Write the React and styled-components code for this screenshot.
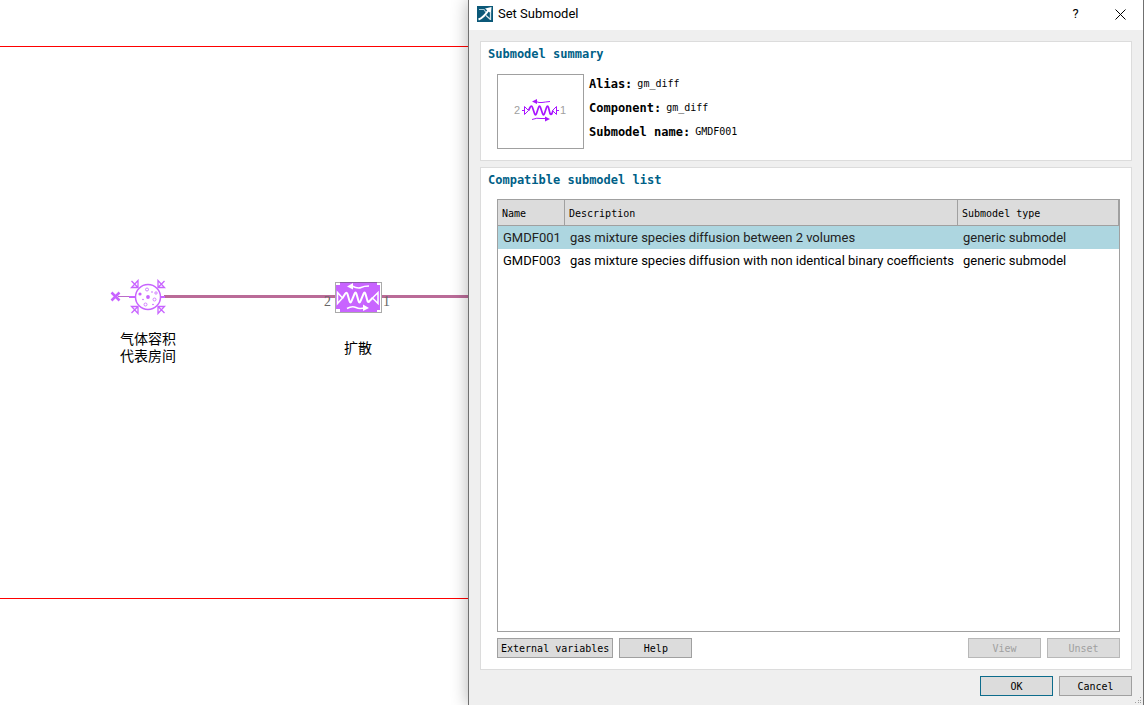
import React from "react";
import styled, { createGlobalStyle, css } from "styled-components";

const mono = '"DejaVu Sans Mono", "Noto Sans CJK SC", monospace';
const sans = 'Roboto, "Noto Sans CJK SC", sans-serif';

const GlobalStyle = createGlobalStyle`
  *, *::before, *::after { box-sizing: border-box; }
  body { margin: 0; background: #fff; color: #000; font: 10px/16px ${mono}; }
  h1, h2, p, dl, dt, dd, figure { margin: 0; }
`;

const Page = styled.div`
  display: grid;
  grid-template-columns: minmax(0, 468fr) minmax(0, 676fr);
  min-height: 100vh;
  overflow: hidden;
`;

const Canvas = styled.main`
  display: flex;
  padding: 46px 0 106px;
  overflow: hidden;
`;

const Sheet = styled.div`
  position: relative;
  flex: 1;
  border: solid #f00;
  border-width: 1px 0;
`;

const Wire = styled.div`
  position: absolute;
  top: 248px;
  left: 164px;
  right: 0;
  height: 3px;
  background: #ba6b98;
`;

const Node = styled.figure`
  position: absolute;
  top: ${(p) => p.$top}px;
  left: ${(p) => p.$left}px;
  width: ${(p) => p.$width}px;
  display: flex;
  flex-direction: column;
  align-items: center;

  svg { display: block; }
`;

const NodeLabel = styled.figcaption`
  margin-top: ${(p) => p.$gap}px;
  font: 14px/17px "Noto Sans CJK SC", sans-serif;
  text-align: center;
  white-space: pre;
`;

const Dialog = styled.section`
  position: relative;
  display: flex;
  flex-direction: column;
  border: solid #707070;
  border-width: 0 1px;
  background: #efefef;
  box-shadow: 0 0 16px rgba(0, 0, 0, 0.3);
`;

const TitleBar = styled.header`
  display: flex;
  align-items: center;
  height: 30px;
  padding: 0 0 2px 8px;
  background: #fff;
`;

const Title = styled.h1`
  flex: 1;
  margin-left: 5px;
  font: 13px/20px ${sans};
`;

const TitleButton = styled.button`
  display: grid;
  place-items: center;
  width: 45px;
  height: 28px;
  padding: 0;
  border: 0;
  background: none;
  font: 13px/20px ${sans};
  color: #000;
`;

const Body = styled.div`
  flex: 1;
  display: flex;
  flex-direction: column;
  gap: 6px;
  padding: 11px 11px 9px;
`;

const Panel = styled.section`
  display: flex;
  flex-direction: column;
  padding: 4px 11px 11px 16px;
  border: 1px solid #dcdcdc;
  background: #fff;
  ${(p) => p.$grow && css`flex: 1;`}
`;

const PanelTitle = styled.h2`
  margin-left: -9px;
  font: bold 12px/16px ${mono};
  color: #005f87;
`;

const Summary = styled.div`
  display: flex;
  gap: 5px;
  margin-top: 12px;
`;

const Thumb = styled.div`
  display: grid;
  place-items: center;
  width: 87px;
  height: 75px;
  border: 1px solid #a0a0a0;
`;

const Facts = styled.dl`
  display: flex;
  flex-direction: column;
  gap: 8px;
  padding-top: 2px;
`;

const Fact = styled.div`
  display: flex;
  gap: 5px;

  dt { font: bold 12px/16px ${mono}; }
`;

const TableFrame = styled.div`
  flex: 1;
  margin-top: 11px;
  border: 1px solid #a0a0a0;
`;

const Table = styled.table`
  width: 100%;
  border-collapse: separate;
  border-spacing: 0;
  table-layout: fixed;
`;

const HeadCell = styled.th`
  width: ${(p) => p.$width || "auto"};
  height: 26px;
  padding: 2px 4px 0;
  border: solid #a0a0a0;
  border-width: 0 1px 1px 0;
  background: #dcdcdc;
  font-weight: normal;
  text-align: left;
`;

const Row = styled.tr`
  height: 23px;
  background: ${(p) => (p.$selected ? "#add6e0" : "#fff")};
  color: ${(p) => (p.$selected ? "#222" : "#000")};
`;

const Cell = styled.td`
  padding: 0 5px;
  font: 13px/22px ${sans};
  white-space: nowrap;
`;

const ButtonRow = styled.div`
  display: flex;
  gap: 6px;
  margin-top: ${(p) => p.$top || 0}px;
`;

const Spacer = styled.div`
  flex: 1;
`;

const Button = styled.button`
  min-width: 73px;
  height: 20px;
  padding: 1px 3px 0;
  border: 1px solid ${(p) => (p.$primary ? "#0d6c8c" : "#a0a0a0")};
  background: #dcdcdc;
  color: #000;
  font: 10px/16px ${mono};

  &:disabled {
    border-color: #b8b8b8;
    color: #a0a0a0;
  }
`;

const Grip = styled.svg`
  position: absolute;
  right: 0;
  bottom: 0;
`;

const AppIcon = () => (
  <svg width="16" height="16" viewBox="0 0 16 16" aria-hidden="true">
    <rect width="16" height="16" fill="#0b5878" />
    <path d="M2 3.500h5l2 3" fill="none" stroke="#a9c8d4" strokeWidth="1.200" />
    <path d="M1.500 13.500C6 12 9 8 12 3.500" fill="none" stroke="#fff" strokeWidth="2.200" />
    <path d="M8 2.500L14.500 1L14 7.500z" fill="#fff" />
    <path d="M13.500 6v8M9 9.500l4.500 4" fill="none" stroke="#d5e5eb" strokeWidth="1.300" />
  </svg>
);

const VolumeIcon = () => (
  <svg width="76" height="36" viewBox="0 0 76 36" fill="none" stroke="#c864ff" aria-hidden="true">
    <path d="M1.500 13.500 9.500 21.500M9.500 13.500l-8 8" strokeWidth="2.500" />
    <path d="M8 17.500h12" stroke="#ba6bc8" />
    <path d="M19 18h6M51 18h4" strokeWidth="2" />
    <circle cx="38" cy="18" r="12.500" strokeWidth="1.500" />
    <g strokeWidth="1.300">
      <path d="M21.500 2l6 6M28 1.500V8.500H21.500z" /><path d="M54.500 2l-6 6M48 1.500V8.500H54.500z" />
      <path d="M21.500 34l6-6M28 34.500V27.500H21.500z" /><path d="M54.500 34l-6-6M48 34.500V27.500H54.500z" />
    </g>
    <g strokeWidth=".8">
      <circle cx="37" cy="10.500" r="1.500" /><circle cx="44.500" cy="20.500" r="1.500" />
      <circle cx="35.500" cy="25.500" r="1.500" /><circle cx="46" cy="14" r="1.200" />
    </g>
    <g fill="#c864ff" stroke="none">
      <circle cx="38" cy="18" r="1.900" /><circle cx="30" cy="15" r="1.600" />
      <circle cx="33" cy="20.500" r=".8" /><circle cx="42" cy="13" r=".8" /><circle cx="43" cy="25.500" r=".8" />
    </g>
  </svg>
);

const DiffusionIcon = () => (
  <svg width="72" height="33" viewBox="0 0 72 33" fill="none" role="img" aria-label="gm_diff">
    <rect x="13" y="0" width="47" height="33" fill="#fff" />
    <path d="M18 1H55V4H58V29H55V31H18V28H14V4H18z" fill="#c864ff" />
    <rect x="13.500" y="1.500" width="46" height="30" stroke="#555" strokeDasharray="1 1" />
    <path d="M15.500 11.500v11l5-5.500zM56 11.500v11l-5.500-5.500z" stroke="#fff" strokeWidth="1.500" />
    <path d="M20.500 17l2.500-4q1.500-2.500 2.500 0l2 7q1 3 2 0l3-7q1-3 2 0l2 7q1 3 2 0l3-7q1-3 2 0l2 7q1 2 2 0l3-3" stroke="#fff" strokeWidth="2" />
    <path d="M30 5q6 3 9 1.500t8-1.500M25 27.500q5-3 9-1t9 0" stroke="#fff" strokeWidth="1.500" />
    <path d="M25 5.500l6-3.500v6.500zM47 27l-6-3.500v6.500z" fill="#fff" />
    <g fill="#666" fontFamily="Liberation Serif, serif" fontSize="14">
      <text x="2" y="25">2</text><text x="61" y="25">1</text>
    </g>
  </svg>
);

const ThumbIcon = () => (
  <svg width="56" height="26" viewBox="0 0 56 26" fill="none" stroke="#a814ff" role="img" aria-label="gm_diff">
    <path d="M9 11.500h3M43 11.500h3" />
    <path d="M11.500 7.500v8l4-4zM43.500 7.500v8l-4-4z" />
    <path d="M15.500 11.500l1.500-3q1.500-3 2.500 0l2 6q1 3 2 0l2-6q1-3 2 0l2 6q1 3 2 0l2-6q1-3 2 0l1.500 6q1 2 2 0l1-3" strokeWidth="1.700" />
    <path d="M23 2.500q3 1.500 6 1t8-1M19 20.500q5-2 9-1h6" />
    <path d="M19 2.500l5-2.500v5zM37 20l-5-2.500v5z" fill="#a814ff" stroke="none" />
    <g fill="#a0a0a0" stroke="none" fontFamily="Liberation Sans, sans-serif" fontSize="11">
      <text x="1" y="15">2</text><text x="47" y="15">1</text>
    </g>
  </svg>
);

const facts = [["Alias:", "gm_diff"], ["Component:", "gm_diff"], ["Submodel name:", "GMDF001"]];
const models = [
  ["GMDF001", "gas mixture species diffusion between 2 volumes", "generic submodel"],
  ["GMDF003", "gas mixture species diffusion with non identical binary coefficients", "generic submodel"],
];

export default function App() {
  return (
    <Page>
      <GlobalStyle />
      <Canvas>
        <Sheet>
          <Wire />
          <Node $top={232} $left={110} $width={76}>
            <VolumeIcon />
            <NodeLabel $gap={15}>{"气体容积\n代表房间"}</NodeLabel>
          </Node>
          <Node $top={234} $left={322} $width={72}>
            <DiffusionIcon />
            <NodeLabel $gap={25}>扩散</NodeLabel>
          </Node>
        </Sheet>
      </Canvas>
      <Dialog role="dialog" aria-labelledby="title">
        <TitleBar>
          <AppIcon />
          <Title id="title">Set Submodel</Title>
          <TitleButton aria-label="Help">?</TitleButton>
          <TitleButton aria-label="Close">
            <svg width="11" height="11" viewBox="0 0 11 11"><path d="M.5.5l10 10M10.500.5l-10 10" stroke="#000" /></svg>
          </TitleButton>
        </TitleBar>
        <Body>
          <Panel>
            <PanelTitle>Submodel summary</PanelTitle>
            <Summary>
              <Thumb><ThumbIcon /></Thumb>
              <Facts>
                {facts.map(([k, v]) => <Fact key={k}><dt>{k}</dt><dd>{v}</dd></Fact>)}
              </Facts>
            </Summary>
          </Panel>
          <Panel $grow>
            <PanelTitle>Compatible submodel list</PanelTitle>
            <TableFrame>
              <Table>
                <thead>
                  <tr>
                    <HeadCell $width="67px">Name</HeadCell>
                    <HeadCell>Description</HeadCell>
                    <HeadCell $width="161px">Submodel type</HeadCell>
                  </tr>
                </thead>
                <tbody>
                  {models.map((m, i) => (
                    <Row key={m[0]} $selected={i === 0}>{m.map((t) => <Cell key={t}>{t}</Cell>)}</Row>
                  ))}
                </tbody>
              </Table>
            </TableFrame>
            <ButtonRow $top={6}>
              <Button>External variables</Button>
              <Button>Help</Button>
              <Spacer />
              <Button disabled>View</Button>
              <Button disabled>Unset</Button>
            </ButtonRow>
          </Panel>
          <ButtonRow>
            <Spacer />
            <Button $primary>OK</Button>
            <Button>Cancel</Button>
          </ButtonRow>
        </Body>
        <Grip width="8" height="8" viewBox="0 0 8 8" fill="#a0a0a0" aria-hidden="true">
          <path d="M5 0h1v1H5zM3 3h1v1H3zM5 3h1v1H5zM0 5h1v1H0zM3 5h1v1H3zM5 5h1v1H5z" />
        </Grip>
      </Dialog>
    </Page>
  );
}
